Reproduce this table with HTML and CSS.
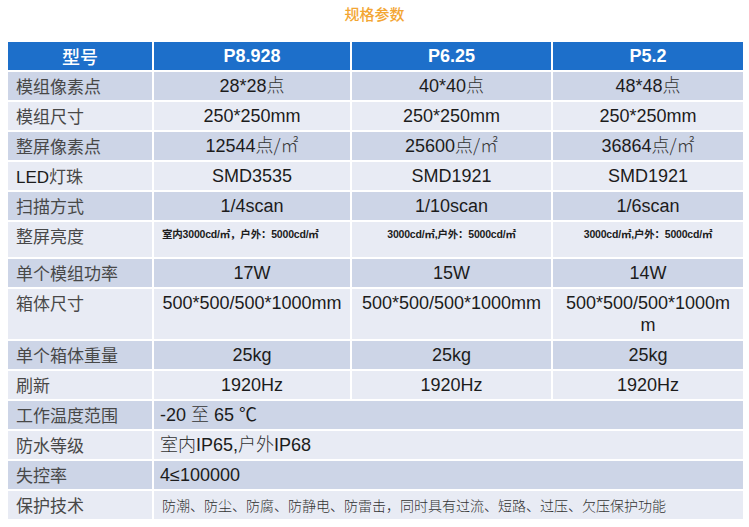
FILE: index.html
```html
<!DOCTYPE html>
<html lang="zh-CN">
<head>
<meta charset="utf-8">
<title>规格参数</title>
<link rel="stylesheet" href="styles.css">
</head>
<body>
<div class="page">
  <h1 class="title">规格参数</h1>
  <table class="spec">
    <colgroup>
      <col class="c-label">
      <col class="c-a">
      <col class="c-b">
      <col class="c-c">
    </colgroup>
    <thead>
      <tr>
        <th class="th-label">型号</th>
        <th>P8.928</th>
        <th>P6.25</th>
        <th>P5.2</th>
      </tr>
    </thead>
    <tbody>
      <tr class="dark">
        <td class="label">模组像素点</td>
        <td>28*28<span class="cn">点</span></td>
        <td>40*40<span class="cn">点</span></td>
        <td>48*48<span class="cn">点</span></td>
      </tr>
      <tr class="light">
        <td class="label">模组尺寸</td>
        <td>250*250mm</td>
        <td>250*250mm</td>
        <td>250*250mm</td>
      </tr>
      <tr class="dark">
        <td class="label">整屏像素点</td>
        <td>12544<span class="cn">点/㎡</span></td>
        <td>25600<span class="cn">点/㎡</span></td>
        <td>36864<span class="cn">点/㎡</span></td>
      </tr>
      <tr class="light">
        <td class="label"><span class="latin">LED</span>灯珠</td>
        <td>SMD3535</td>
        <td>SMD1921</td>
        <td>SMD1921</td>
      </tr>
      <tr class="dark">
        <td class="label">扫描方式</td>
        <td>1/4scan</td>
        <td>1/10scan</td>
        <td>1/6scan</td>
      </tr>
      <tr class="light tall">
        <td class="label">整屏亮度</td>
        <td class="small left">室内3000cd/㎡，户外：5000cd/㎡</td>
        <td class="small">3000cd/㎡,户外：5000cd/㎡</td>
        <td class="small">3000cd/㎡,户外：5000cd/㎡</td>
      </tr>
      <tr class="dark">
        <td class="label">单个模组功率</td>
        <td>17W</td>
        <td>15W</td>
        <td>14W</td>
      </tr>
      <tr class="light">
        <td class="label">箱体尺寸</td>
        <td>500*500/500*1000mm</td>
        <td>500*500/500*1000mm</td>
        <td>500*500/500*1000mm</td>
      </tr>
      <tr class="dark">
        <td class="label">单个箱体重量</td>
        <td>25kg</td>
        <td>25kg</td>
        <td>25kg</td>
      </tr>
      <tr class="light">
        <td class="label">刷新</td>
        <td>1920Hz</td>
        <td>1920Hz</td>
        <td>1920Hz</td>
      </tr>
      <tr class="dark">
        <td class="label">工作温度范围</td>
        <td class="left" colspan="3">-20 <span class="cn">至</span> 65 ℃</td>
      </tr>
      <tr class="light">
        <td class="label">防水等级</td>
        <td class="left" colspan="3"><span class="cn">室内</span>IP65,<span class="cn">户外</span>IP68</td>
      </tr>
      <tr class="dark">
        <td class="label">失控率</td>
        <td class="left" colspan="3">4≤100000</td>
      </tr>
      <tr class="light">
        <td class="label">保护技术</td>
        <td class="left note" colspan="3">防潮、防尘、防腐、防静电、防雷击，同时具有过流、短路、过压、欠压保护功能</td>
      </tr>
    </tbody>
  </table>
</div>
</body>
</html>
```
FILE: styles.css
```css
html, body {
  margin: 0;
  padding: 0;
  background: #ffffff;
}

.page {
  padding: 0 6px 0 6px;
  font-family: "Liberation Sans", "Noto Sans CJK SC", sans-serif;
}

.title {
  margin: 0;
  height: 28px;
  line-height: 28px;
  padding-bottom: 12px;
  text-align: center;
  font-family: "Noto Sans CJK SC", sans-serif;
  font-size: 15px;
  font-weight: 500;
  color: #f3a633;
}

.spec {
  width: 737px;
  table-layout: fixed;
  border-collapse: collapse;
}

.c-label { width: 146px; }
.c-a { width: 198px; }
.c-b { width: 201px; }
.c-c { width: 192px; }

.spec th,
.spec td {
  border: 2px solid #ffffff;
  padding: 3px 8px;
  height: 22px;
  line-height: 22px;
  vertical-align: top;
  text-align: center;
  word-break: break-all;
}

.spec th {
  background: #1d6fca;
  color: #ffffff;
  font-size: 18px;
  font-weight: bold;
}

.spec th.th-label {
  font-family: "Noto Sans CJK SC", sans-serif;
  font-weight: 500;
}

.spec td {
  font-size: 18px;
  color: #1c1c1c;
}

.dark td { background: #cdd5e7; }
.light td { background: #e8ebf4; }

.spec td.label {
  text-align: left;
  font-family: "Noto Sans CJK SC", sans-serif;
  font-weight: 400;
  font-size: 17px;
  color: #484848;
  padding-left: 8px;
  padding-right: 2px;
}

.label .latin {
  font-family: "Liberation Sans", sans-serif;
  font-weight: normal;
  color: #1c1c1c;
  line-height: 1;
}

.cn {
  font-family: "Noto Sans CJK SC", sans-serif;
  font-weight: 300;
  color: #333333;
  line-height: 1;
}

.spec td.left {
  text-align: left;
  padding-left: 6px;
}

.tall td { height: 27px; }

.spec td.small {
  font-size: 10.5px;
  font-weight: bold;
  line-height: 14px;
  padding-top: 5px;
  letter-spacing: -0.2px;
}

.spec td.small.left { padding-left: 8px; }

.spec td.note {
  font-family: "Noto Sans CJK SC", sans-serif;
  font-weight: 300;
  font-size: 14px;
  color: #333333;
  padding-left: 8px;
}
```
